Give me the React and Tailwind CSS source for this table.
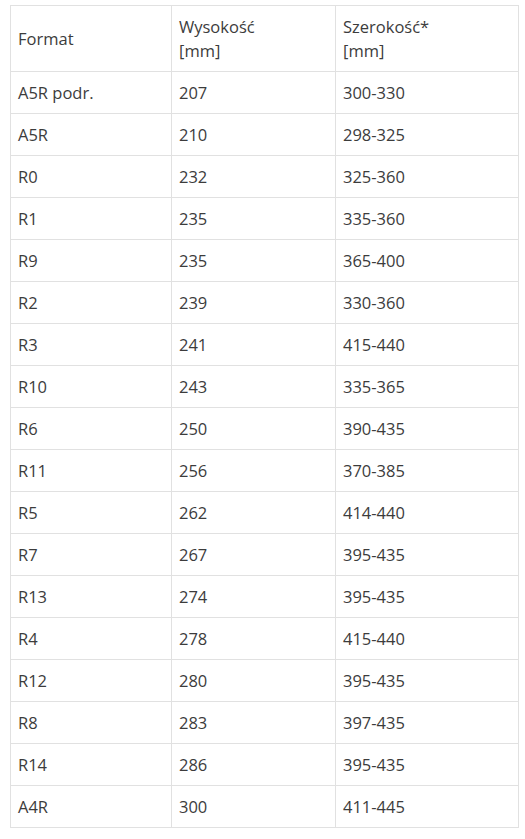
const rows = [
  ['A5R podr.', '207', '300-330'],
  ['A5R', '210', '298-325'],
  ['R0', '232', '325-360'],
  ['R1', '235', '335-360'],
  ['R9', '235', '365-400'],
  ['R2', '239', '330-360'],
  ['R3', '241', '415-440'],
  ['R10', '243', '335-365'],
  ['R6', '250', '390-435'],
  ['R11', '256', '370-385'],
  ['R5', '262', '414-440'],
  ['R7', '267', '395-435'],
  ['R13', '274', '395-435'],
  ['R4', '278', '415-440'],
  ['R12', '280', '395-435'],
  ['R8', '283', '397-435'],
  ['R14', '286', '395-435'],
  ['A4R', '300', '411-445'],
];

export default function App() {
  const cell = 'border border-[#e1e1e1] pl-[7px] pr-2 py-[8.5px] text-left align-middle font-normal';
  return (
    <div className="min-h-[839px] bg-white pt-[5px] pl-[10px] font-['Open_Sans',sans-serif] text-[16.5px] leading-6 text-[#3c3c3c]">
      <table className="w-[509px] border-collapse">
        <thead>
          <tr>
            <th className={`${cell} w-[161px]`}>Format</th>
            <th className={`${cell} w-[164px]`}>
              Wysokość
              <br />
              [mm]
            </th>
            <th className={cell}>
              Szerokość*
              <br />
              [mm]
            </th>
          </tr>
        </thead>
        <tbody>
          {rows.map((r) => (
            <tr key={r[0]}>
              <td className={cell}>{r[0]}</td>
              <td className={cell}>{r[1]}</td>
              <td className={cell}>{r[2]}</td>
            </tr>
          ))}
        </tbody>
      </table>
    </div>
  );
}
